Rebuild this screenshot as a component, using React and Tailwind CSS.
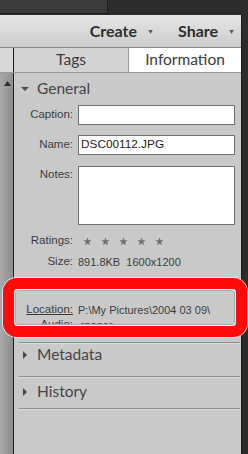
import React from 'react';

const font = { fontFamily: 'Lato, "Noto Sans", Arial, sans-serif' };
const small = { fontFamily: '"Liberation Sans", Arial, sans-serif' };

const Caret = ({ open }) => (
  <svg width="8" height="8" viewBox="0 0 8 8" className="shrink-0">
    {open ? <path d="M0 2 L8 2 L4 6 Z" fill="#4a4a4a" /> : <path d="M2 0 L6 4 L2 8 Z" fill="#4a4a4a" />}
  </svg>
);

const Star = () => (
  <svg width="9" height="9" viewBox="0 0 10 10">
    <path d="M5 0.5 L6.2 3.6 L9.5 3.7 L6.9 5.8 L7.8 9.2 L5 7.3 L2.2 9.2 L3.1 5.8 L0.5 3.7 L3.8 3.6 Z" fill="#707070" />
  </svg>
);

const Separator = () => <div className="ml-[5px] mr-[1px] h-[2px] border-t border-[#8f8f8f] border-b border-b-[#dadada]" />;

const Section = ({ title, open }) => (
  <div className="flex items-center h-[20px] pl-[7px] gap-[8px]">
    <Caret open={open} />
    <span className="text-[15.5px] text-[#454545] leading-none">{title}</span>
  </div>
);

const Label = ({ children, underline }) => (
  <span style={small} className={`w-[59px] shrink-0 text-right text-[11.5px] text-[#3c3c3c] leading-none ${underline ? 'underline' : ''}`}>{children}</span>
);

const Value = ({ children }) => (
  <span style={small} className="text-[11px] text-[#3c3c3c] leading-none whitespace-pre">{children}</span>
);

export default function App() {
  return (
    <div className="w-[248px] h-[454px] bg-[#2c2c2c] relative overflow-hidden" style={font}>
      {/* top dark strip */}
      <div className="h-[15px] relative">
        <div className="absolute left-0 top-0 w-[108px] h-[14px] bg-[#3a3a3a] border-r border-b border-[#1c1c1c]" />
      </div>

      <div className="w-[242px] border-r border-[#1a1a1a] flex flex-col h-[439px]">
        {/* toolbar */}
        <div className="h-[33px] bg-gradient-to-b from-[#e6e6e6] to-[#cccccc] border-b border-[#8a8a8a] flex items-center justify-end pr-[6px]">
          <span className="text-[16px] font-bold text-[#2e2e2e] leading-none">Create</span>
          <span className="ml-[10px] mr-[24px] text-[7px] text-[#555]">▼</span>
          <span className="text-[16px] font-bold text-[#2e2e2e] leading-none">Share</span>
          <span className="ml-[10px] text-[7px] text-[#555]">▼</span>
        </div>

        {/* tabs */}
        <div className="h-[25px] flex border-b border-[#9a9a9a]">
          <div className="w-[14px] bg-[#d8d8d8] border-r border-[#222]" />
          <div className="w-[115px] bg-[#d3d3d3] border-r border-[#9a9a9a] flex items-center justify-center text-[15.5px] text-[#3a3a3a]">Tags</div>
          <div className="flex-1 bg-white flex items-center justify-center text-[15.5px] text-[#3a3a3a]">Information</div>
        </div>

        {/* body */}
        <div className="flex flex-1">
          <div className="w-[14px] bg-gradient-to-r from-[#a8a8a8] to-[#8e8e8e] border-r border-[#1c1c1c] relative">
            <svg width="7" height="5" viewBox="0 0 7 5" className="absolute left-[4px] top-[8px]">
              <path d="M0 5 L3.5 0 L7 5 Z" fill="#2a2a2a" />
            </svg>
          </div>
          <div className="flex-1 bg-[#c9c9c9] flex flex-col pt-[6px]">
            <Section title="General" open />

            <div className="flex items-center gap-[5px] mt-[6px]">
              <Label>Caption:</Label>
              <div className="w-[157px] h-[20px] bg-white border border-[#6e6e6e]" />
            </div>
            <div className="flex items-center gap-[5px] mt-[10px]">
              <Label>Name:</Label>
              <div style={small} className="w-[157px] h-[20px] bg-white border border-[#6e6e6e] flex items-center pl-[2px] text-[11.8px] text-[#222] leading-none">DSC00112.JPG</div>
            </div>
            <div className="flex items-start gap-[5px] mt-[11px]">
              <span className="pt-[3px] flex"><Label>Notes:</Label></span>
              <div className="w-[157px] h-[59px] bg-white border border-[#6e6e6e]" />
            </div>
            <div className="flex items-center gap-[5px] mt-[9px] h-[14px]">
              <Label>Ratings:</Label>
              <div className="flex gap-[9px] ml-[5px]">
                <Star /><Star /><Star /><Star /><Star />
              </div>
            </div>
            <div className="flex items-center gap-[5px] mt-[7px] h-[14px]">
              <Label>Size:</Label>
              <Value>891.8KB  1600x1200</Value>
            </div>
            <div className="flex items-center gap-[5px] mt-[7px] h-[14px]">
              <Label>Date:</Label>
              <Value>2004/03/09</Value>
            </div>
            <div className="flex items-center gap-[5px] mt-[13px] h-[14px]">
              <Label underline>Location:</Label>
              <Value>P:\My Pictures\2004 03 09\</Value>
            </div>
            <div className="flex items-center gap-[5px] mt-[1px] h-[14px]">
              <Label>Audio:</Label>
              <Value>&lt;none&gt;</Value>
            </div>

            <div className="mt-[10px]"><Separator /></div>
            <div className="mt-[1px]"><Section title="Metadata" /></div>
            <div className="mt-[11px]"><Separator /></div>
            <div className="mt-[4px]"><Section title="History" /></div>
            <div className="mt-[6px]"><Separator /></div>
          </div>
        </div>
      </div>

      {/* red highlight annotation */}
      <div className="absolute left-[3px] top-[278px] w-[244px] h-[59px] rounded-[14px] border-[11px] border-[#ff0a0a] shadow-[0_0_0_1px_#f4dede]">
        <div className="w-full h-full rounded-[4px] border border-[#f3f3f3] shadow-[inset_0_0_0_1px_#a9a9a9]" />
      </div>
    </div>
  );
}
